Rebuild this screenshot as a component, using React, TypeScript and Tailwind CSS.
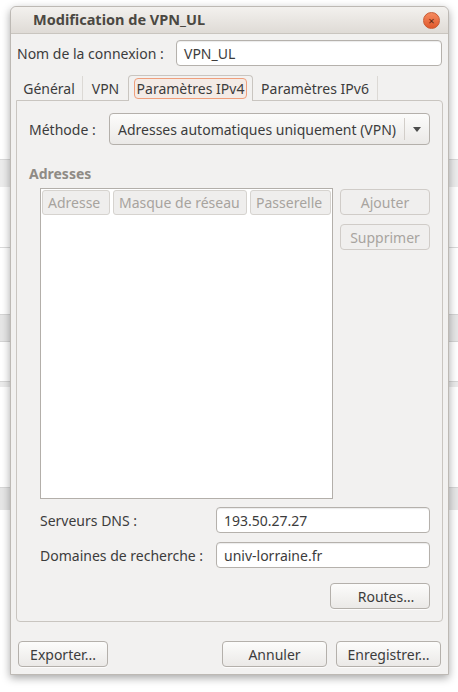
import type { ReactNode } from "react";

const font = "font-['Noto_Sans','Open_Sans',sans-serif]";

function Entry({ value, className = "" }: { value: string; className?: string }) {
  return (
    <div
      className={`flex h-[26px] items-center rounded-[4px] border border-[#b5b1ac] bg-white px-[7px] text-[14px] text-[#3c3c3c] shadow-[inset_0_1px_1px_rgba(0,0,0,0.08)] ${className}`}
    >
      {value}
    </div>
  );
}

function Button({
  children,
  disabled = false,
  className = "",
}: {
  children: ReactNode;
  disabled?: boolean;
  className?: string;
}) {
  return (
    <div
      className={`flex h-[26px] items-center justify-center rounded-[4px] border text-[14px] ${
        disabled
          ? "border-[#d0ccc8] bg-[#f0efee] text-[#a8a49f]"
          : "border-[#b4b0ab] bg-gradient-to-b from-[#fcfcfb] to-[#ebe9e7] text-[#3c3c3c] shadow-[0_1px_0_rgba(255,255,255,0.8)]"
      } ${className}`}
    >
      {children}
    </div>
  );
}

function HeaderCell({ label, className = "" }: { label: string; className?: string }) {
  return (
    <div
      className={`flex h-[25px] items-center rounded-[3px] border border-[#d6d3cf] bg-[#efeeed] px-[5px] text-[14px] text-[#a7a39e] ${className}`}
    >
      {label}
    </div>
  );
}

function Tab({ label, className = "" }: { label: string; className?: string }) {
  return (
    <div
      className={`mt-[2px] flex h-[24px] items-center justify-center border-r border-[#dcd9d5] text-[14px] text-[#3c3c3c] ${className}`}
    >
      {label}
    </div>
  );
}

export default function App() {
  return (
    <div className={`relative h-[692px] w-[458px] overflow-hidden bg-white ${font}`}>
      {/* desktop behind the dialog */}
      <div className="absolute inset-0 flex flex-col">
        <div className="h-[160px] border-b border-[#d9d9d9]" />
        <div className="h-[27px] bg-[#ececec]" />
        <div className="h-[61px] border-b border-[#dadada]" />
        <div className="h-[66px]" />
        <div className="h-[28px] border-y border-[#d4d4d4] bg-[#e6e6e6]" />
        <div className="h-[40px] border-b border-[#d6d6d6]" />
        <div className="h-[5px] bg-[#ebebeb]" />
        <div className="h-[101px] border-b border-[#d6d6d6]" />
        <div className="h-[22px] bg-[#e6e6e6]" />
      </div>

      {/* dialog */}
      <div className="absolute left-[10px] top-[6px] flex h-[669px] w-[439px] flex-col rounded-t-[6px] border border-[#bdb9b4] bg-[#f2f1f0] shadow-[0_3px_9px_rgba(0,0,0,0.35)]">
        <div className="flex h-[27px] shrink-0 items-center justify-between rounded-t-[6px] border-b border-[#c9c5bf] bg-gradient-to-b from-[#f3f1ee] to-[#dfdbd6] pl-[22px] pr-[8px]">
          <span className="text-[14.5px] font-bold text-[#4b4842]">Modification de VPN_UL</span>
          <div className="flex h-[17px] w-[17px] items-center justify-center rounded-full border border-[#c85a33] bg-gradient-to-b from-[#f58a5e] to-[#e0582b] text-[11px] leading-none text-[#5a2613]">
            ×
          </div>
        </div>

        <div className="flex flex-1 flex-col px-[5px]">
          <div className="mt-[6px] flex items-center pl-[1px]">
            <span className="w-[159px] text-[14px] text-[#3c3c3c]">Nom de la connexion :</span>
            <Entry value="VPN_UL" className="w-[266px]" />
          </div>

          <div className="mt-[8px] flex h-[26px] items-end">
            <Tab label="Général" className="w-[67px]" />
            <Tab label="VPN" className="w-[45px] border-r-0" />
            <div className="relative -mb-px flex h-[26px] w-[125px] items-center justify-center rounded-t-[4px] border border-b-0 border-[#c9c5c0] bg-[#f2f1f0]">
              <span className="rounded-[4px] border border-[#ef9f7c] bg-[#f4ebe6] px-[2px] text-[14px] leading-[19px] text-[#3c3c3c]">
                Paramètres IPv4
              </span>
            </div>
            <Tab label="Paramètres IPv6" className="w-[125px]" />
          </div>

          <div className="flex h-[522px] flex-col rounded-b-[4px] rounded-tr-[4px] border border-[#c9c5c0] px-[12px] pt-[12px]">
            <div className="flex items-center">
              <span className="w-[80px] text-[14px] text-[#3c3c3c]">Méthode :</span>
              <div className="flex h-[32px] w-[321px] items-center rounded-[4px] border border-[#b4b0ab] bg-gradient-to-b from-[#fcfcfb] to-[#ebe9e7] pl-[8px] text-[14px] text-[#3c3c3c]">
                <span className="flex-1">Adresses automatiques uniquement (VPN)</span>
                <div className="h-[22px] w-px bg-[#d2cec9]" />
                <div className="flex w-[24px] justify-center">
                  <div className="h-0 w-0 border-x-[4px] border-t-[5px] border-x-transparent border-t-[#4c4c4c]" />
                </div>
              </div>
            </div>

            <div className="mt-[18px] text-[14px] font-bold text-[#8f8b85]">Adresses</div>

            <div className="ml-[11px] mt-[4px] flex gap-[7px]">
              <div className="h-[311px] w-[293px] border border-[#b3afaa] bg-white p-[1px]">
                <div className="flex gap-[3px]">
                  <HeaderCell label="Adresse" className="w-[68px]" />
                  <HeaderCell label="Masque de réseau" className="w-[134px]" />
                  <HeaderCell label="Passerelle" className="w-[81px]" />
                </div>
              </div>
              <div className="flex flex-col gap-[9px] pt-[1px]">
                <Button disabled className="w-[90px]">
                  Ajouter
                </Button>
                <Button disabled className="w-[90px]">
                  Supprimer
                </Button>
              </div>
            </div>

            <div className="ml-[11px] mt-[8px] flex flex-col gap-[9px]">
              <div className="flex items-center">
                <span className="w-[176px] text-[14px] text-[#3c3c3c]">Serveurs DNS :</span>
                <Entry value="193.50.27.27" className="w-[214px]" />
              </div>
              <div className="flex items-center">
                <span className="w-[176px] text-[14px] text-[#3c3c3c]">Domaines de recherche :</span>
                <Entry value="univ-lorraine.fr" className="w-[214px]" />
              </div>
            </div>

            <div className="mt-[15px] flex justify-end">
              <Button className="w-[100px] pl-[12px]">Routes…</Button>
            </div>
          </div>

          <div className="mt-[19px] flex items-center px-[2px]">
            <Button className="w-[90px]">Exporter...</Button>
            <div className="flex-1" />
            <Button className="w-[105px]">Annuler</Button>
            <Button className="ml-[9px] w-[105px]">Enregistrer...</Button>
          </div>
        </div>
      </div>
    </div>
  );
}
